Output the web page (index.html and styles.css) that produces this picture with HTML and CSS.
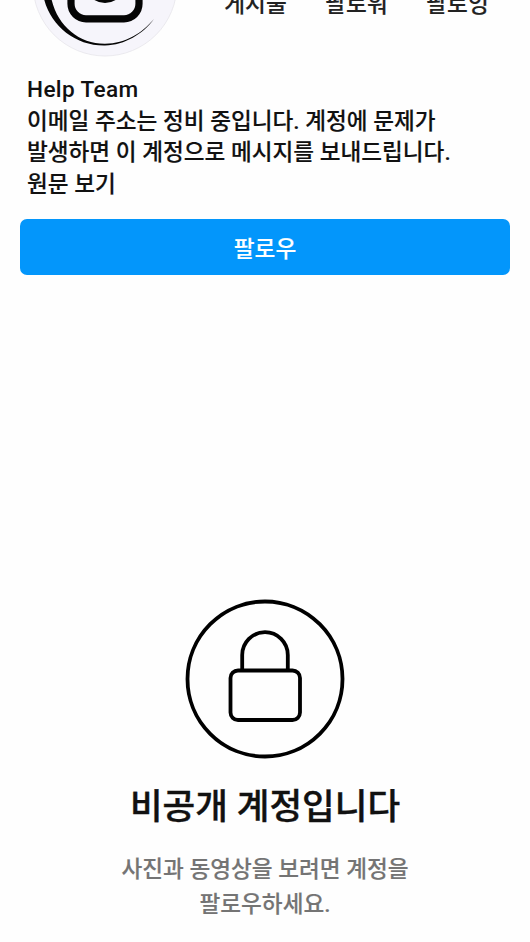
FILE: index.html
```html
<!DOCTYPE html>
<html lang="ko">
  <head>
    <meta charset="UTF-8" />
    <title>Help Team</title>
    <link rel="stylesheet" href="styles.css">
  </head>
  <body>
    <div class="header">
      <!-- profile picture, the top is scrolled off -->
      <svg class="avatar" width="146" height="57" viewBox="0 0 146 57">
        <circle cx="73" cy="-16" r="72" fill="#f6f5fb" stroke="#e4e3e8" stroke-width="0.7" />
        <path d="M11 -6 C16 24 42 46 73 45.500 C93 45 111 34 122 19 C110 33 94 43.500 73 43.800 C46 44 23 24 18.500 -6 Z" fill="#050505" />
        <rect x="39" y="-51" width="68" height="69.800" rx="15" fill="none" stroke="#050505" stroke-width="7.200" />
        <circle cx="73" cy="-17" r="16" fill="none" stroke="#050505" stroke-width="8" />
      </svg>
      <div class="stats">
        <span>게시물</span>
        <span>팔로워</span>
        <span>팔로잉</span>
      </div>
    </div>

    <div class="bio">
      <p class="name">Help Team</p>
      <p>이메일 주소는 정비 중입니다. 계정에 문제가<br>발생하면 이 계정으로 메시지를 보내드립니다.</p>
      <p>원문 보기</p>
    </div>

    <button class="follow">팔로우</button>

    <div class="private">
      <svg width="160" height="160" viewBox="0 0 160 160" fill="none" stroke="#000" stroke-width="3.800">
        <circle cx="80" cy="80" r="77.500" />
        <path d="M57.200 72 V56 A22.800 22.800 0 0 1 102.800 56 V72" />
        <rect x="45.500" y="71.500" width="69.500" height="49.500" rx="7.500" />
      </svg>
      <h1>비공개 계정입니다</h1>
      <p>사진과 동영상을 보려면 계정을<br>팔로우하세요.</p>
    </div>
  </body>
</html>
```

FILE: styles.css
```css
body {
  margin: 0;
  background-color: #fefefe;
  color: #111;
  font-family: Roboto, "Noto Sans CJK KR", sans-serif;
  font-size: 22.6px;
  font-weight: 500;
  -webkit-text-stroke: 0.15px;
}

p, h1 {
  margin: 0;
}

/* Top of the profile */
.header {
  display: flex;
  height: 57px;
  overflow: hidden;
}

.avatar {
  flex: none;
  margin-left: 31.500px;
}

.stats {
  display: flex;
  margin-top: -12px;
  margin-left: 27.500px;
  line-height: 34px;
  color: #222;
}

.stats span {
  width: 101px;
  text-align: center;
}

/* Name and description */
.bio {
  padding: 17px 27px 0;
  line-height: 31.700px;
}

.name {
  letter-spacing: 0.35px;
  -webkit-text-stroke: 0;
}

/* Follow button */
.follow {
  display: block;
  width: 490px;
  height: 56px;
  margin: 18px auto 0;
  padding: 2px 0 0;
  border: none;
  border-radius: 7px;
  background-color: #0396fb;
  color: #fff;
  font: inherit;
}

/* Private account message */
.private {
  margin-top: 324px;
  text-align: center;
}

.private svg {
  display: block;
  margin: 0 auto;
}

.private h1 {
  margin-top: 22px;
  font-size: 35.500px;
  font-weight: 500;
  line-height: 52px;
  -webkit-text-stroke: 0.4px;
}

.private p {
  margin-top: 19px;
  line-height: 35px;
  color: #747474;
}
```
